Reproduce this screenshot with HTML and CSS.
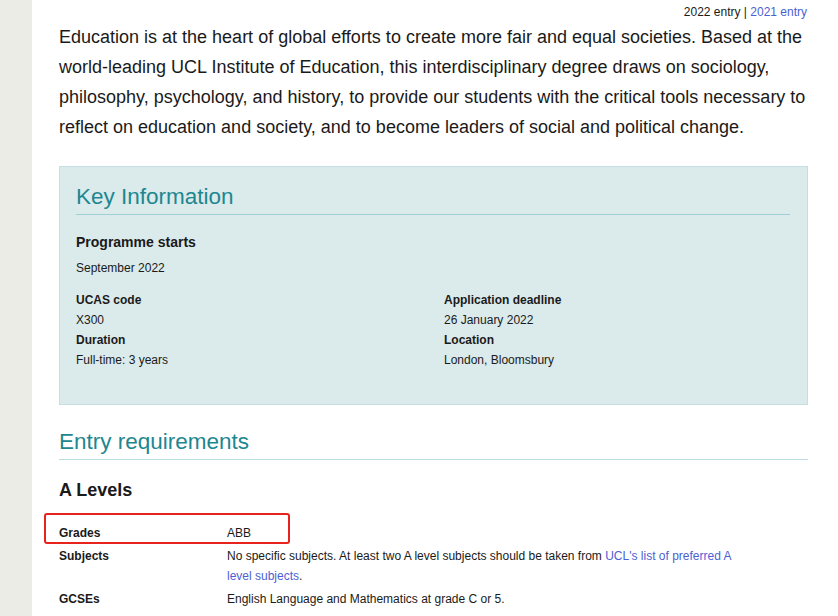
FILE: index.html
```html
<!DOCTYPE html>
<html lang="en">
<head>
<meta charset="utf-8">
<title>Education and Society BA</title>
<link rel="stylesheet" href="styles.css">
</head>
<body>
<div class="page">
  <aside class="side"></aside>
  <main class="main">
    <div class="entry-switch">2022 entry | <a href="#">2021 entry</a></div>
    <p class="intro">Education is at the heart of global efforts to create more fair and equal societies. Based at the world-leading UCL Institute of Education, this interdisciplinary degree draws on sociology, philosophy, psychology, and history, to provide our students with the critical tools necessary to reflect on education and society, and to become leaders of social and political change.</p>

    <section class="key-box">
      <h2 class="key-title">Key Information</h2>
      <h3 class="starts-label">Programme starts</h3>
      <p class="starts-value">September 2022</p>
      <div class="key-grid">
        <div class="key-col">
          <div class="key-label">UCAS code</div>
          <div class="key-value">X300</div>
          <div class="key-label">Duration</div>
          <div class="key-value">Full-time: 3 years</div>
        </div>
        <div class="key-col">
          <div class="key-label">Application deadline</div>
          <div class="key-value">26 January 2022</div>
          <div class="key-label">Location</div>
          <div class="key-value">London, Bloomsbury</div>
        </div>
      </div>
    </section>

    <h2 class="section-title">Entry requirements</h2>
    <h3 class="sub-title">A Levels</h3>
    <div class="req-table">
      <div class="req-row highlighted">
        <div class="req-label">Grades</div>
        <div class="req-value">ABB</div>
        <span class="highlight-box"></span>
      </div>
      <div class="req-row">
        <div class="req-label">Subjects</div>
        <div class="req-value">No specific subjects. At least two A level subjects should be taken from <a href="#">UCL's list of preferred A level subjects</a>.</div>
      </div>
      <div class="req-row">
        <div class="req-label">GCSEs</div>
        <div class="req-value">English Language and Mathematics at grade C or 5.</div>
      </div>
    </div>
  </main>
</div>
</body>
</html>
```

FILE: styles.css
```css
html, body {
  margin: 0;
  padding: 0;
  background: #ffffff;
}

body {
  font-family: "Liberation Sans", Arial, sans-serif;
  color: #1a1a1a;
}

a {
  color: #4d5fd3;
  text-decoration: none;
}

.page {
  display: flex;
  min-height: 616px;
}

.side {
  width: 32px;
  flex: none;
  background: #ececE7;
}

.main {
  width: 749px;
  margin-left: 27px;
}

.entry-switch {
  text-align: right;
  font-size: 12px;
  line-height: 14px;
  padding-top: 5px;
  padding-right: 1px;
}

.intro {
  margin: 3px 0 0;
  font-size: 18px;
  line-height: 30px;
}

.key-box {
  margin-top: 24px;
  background: #dbeaeb;
  border: 1px solid #c3dfe2;
  padding: 15px 17px 34px 16px;
}

.key-title,
.section-title {
  margin: 0;
  font-size: 22.5px;
  font-weight: normal;
  line-height: 30px;
  color: #1d8790;
  padding-bottom: 2px;
  border-bottom: 1px solid #9fcfd4;
}

.starts-label {
  margin: 18px 0 0;
  font-size: 14px;
  line-height: 18px;
  font-weight: bold;
}

.starts-value {
  margin: 8px 0 0;
  font-size: 12px;
  line-height: 18px;
}

.key-grid {
  margin-top: 13px;
  display: grid;
  grid-template-columns: 368px 1fr;
}

.key-label,
.key-value {
  font-size: 12px;
  line-height: 20px;
}

.key-label {
  font-weight: bold;
}

.section-title {
  margin-top: 22px;
  border-bottom-color: #b9dde1;
}

.sub-title {
  margin: 19px 0 0;
  font-size: 18px;
  line-height: 22px;
  font-weight: bold;
}

.req-table {
  margin-top: 22px;
  display: flex;
  flex-direction: column;
  gap: 3px;
}

.req-row {
  display: grid;
  grid-template-columns: 168px 512px;
  font-size: 12px;
  line-height: 20px;
}

.req-label {
  font-weight: bold;
}

.highlighted {
  position: relative;
}

.highlight-box {
  position: absolute;
  left: -15px;
  top: -10px;
  width: 242px;
  height: 27px;
  border: 2px solid #e8231e;
  border-radius: 3px;
}
```
